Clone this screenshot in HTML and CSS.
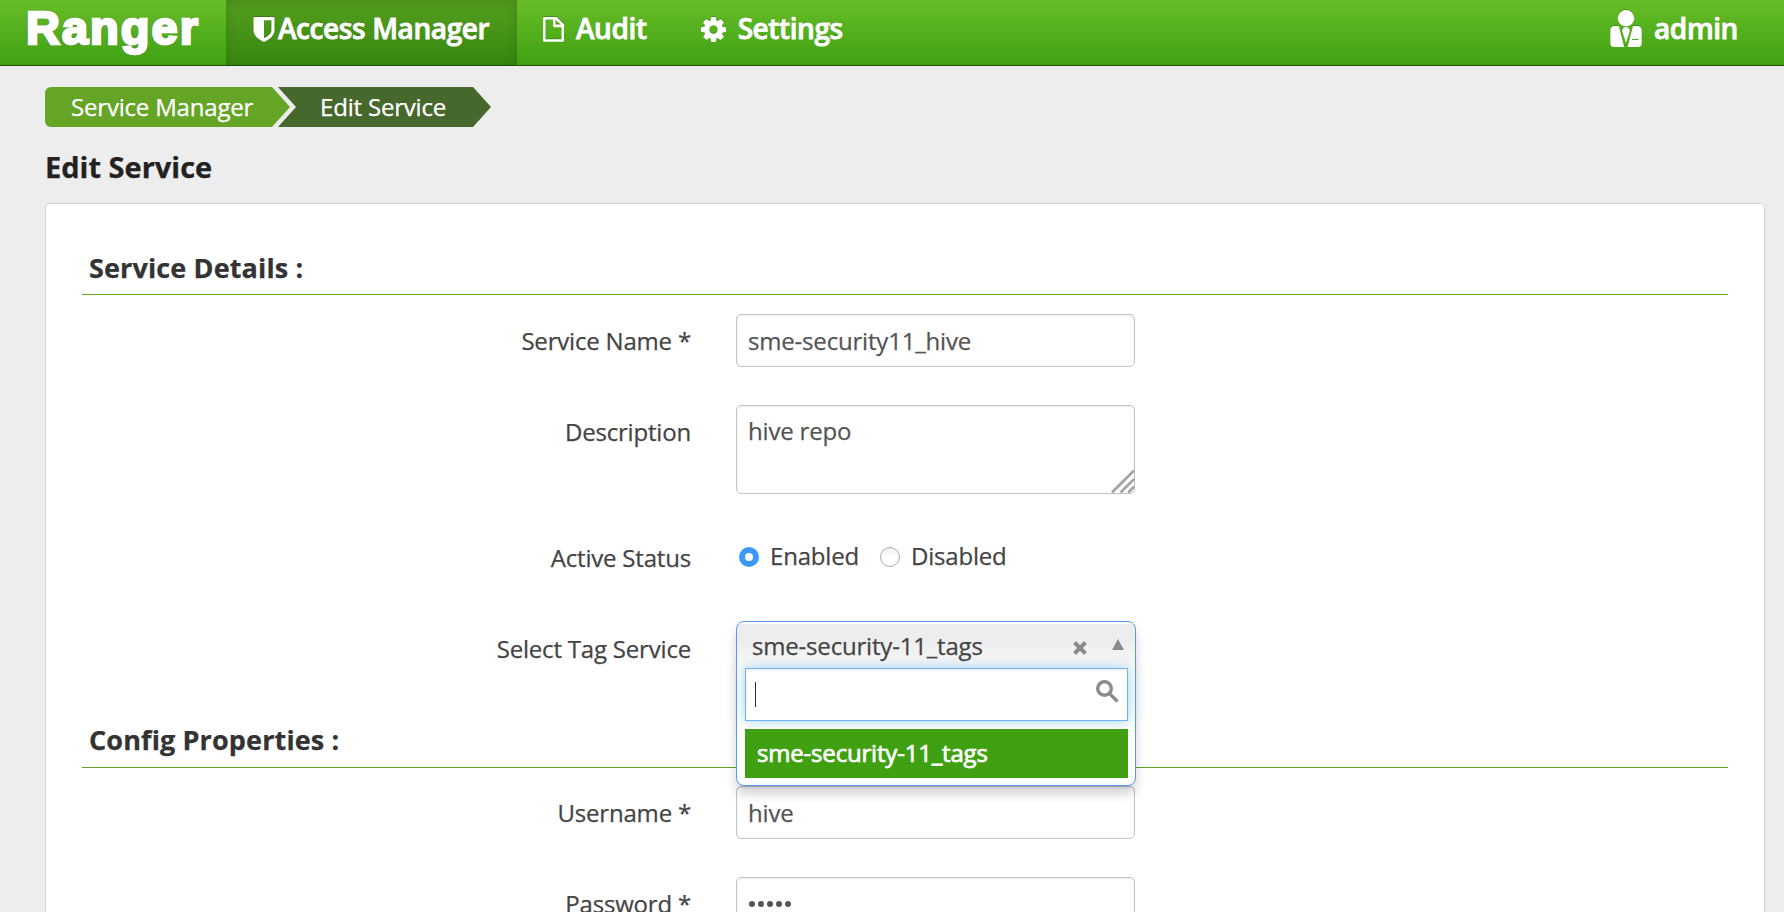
FILE: index.html
```html
<!DOCTYPE html>
<html lang="en">
<head>
<meta charset="utf-8">
<title>Ranger - Edit Service</title>
<link rel="stylesheet" href="styles.css">
</head>
<body>
<header class="navbar">
  <a class="brand">Ranger</a>
  <nav class="menu">
    <a class="menu-item active">
      <svg class="ico-shield" viewBox="0 0 22 25"><path fill-rule="evenodd" d="M1.500 0H20.500Q21.500 0 21.500 1V13C21.500 18.500 16.500 22.500 11 25C5.500 22.500 .5 18.500 .5 13V1Q.5 0 1.500 0ZM11 3.200V21.300C15.500 18.800 18.400 16.300 18.400 13V3.200Z"/></svg><span class="access">Access Manager</span>
    </a>
    <a class="menu-item audit">
      <svg class="ico-file" viewBox="0 0 21 25"><path fill-rule="evenodd" d="M1.500 0H13.500L21 7.300V23.200Q21 24.700 19.500 24.700H1.500Q0 24.700 0 23.200V1.500Q0 0 1.500 0ZM2.500 2.500V22.200H18.500V10.200H11.500Q10 10.200 10 8.700V2.500ZM12.600 2.800V7.600H17.800Z"/></svg><span>Audit</span>
    </a>
    <a class="menu-item settings">
      <svg class="ico-cog" viewBox="0 128 1536 1536"><path d="M1024 896q0-106-75-181t-181-75-181 75-75 181 75 181 181 75 181-75 75-181zm512-109v222q0 12-8 23t-20 13l-185 28q-19 54-39 91 35 50 107 138 10 12 10 25t-9 23q-27 37-99 108t-94 71q-12 0-26-9l-138-108q-44 23-91 38-16 136-29 186-7 28-36 28h-222q-14 0-24.500-8.500t-11.500-21.500l-28-184q-49-16-90-37l-141 107q-10 9-25 9-14 0-25-11-126-114-165-168-7-10-7-23 0-12 8-23 15-21 51-66.500t54-70.500q-27-50-41-99l-183-27q-13-2-21-12.500t-8-23.500v-222q0-12 8-23t19-13l186-28q14-46 39-92-40-57-107-138-10-12-10-24 0-10 9-23 26-36 98.500-107.500t94.500-71.500q13 0 26 10l138 107q44-23 91-38 16-136 29-186 7-28 36-28h222q14 0 24.500 8.500t11.500 21.500l28 184q49 16 90 37l142-107q9-9 24-9 13 0 25 10 129 119 165 170 7 8 7 22 0 12-8 23-15 21-51 66.500t-54 70.500q26 50 41 98l183 28q13 2 21 12.500t8 23.500z"/></svg><span>Settings</span>
    </a>
  </nav>
  <a class="user">
    <svg class="ico-user" viewBox="0 0 32 37"><circle cx="16" cy="8.200" r="8.200"/><path d="M4.500 16H8.800L14.300 37H4Q.3 37 .3 33V20.500Q.3 16 4.500 16ZM23 16H27.500Q31.700 16 31.700 20.500V33Q31.700 37 28 37H17.500Z"/><path d="M13.800 17.200H18.200L20 20.600L16 33L12 20.600Z"/><path class="pocket" d="M22 29.500H28.500"/></svg><span>admin</span>
  </a>
</header>
<main class="page">
  <div class="crumbs">
    <a class="crumb first">Service Manager</a><a class="crumb last">Edit Service</a>
  </div>
  <h1 class="title">Edit Service</h1>
  <section class="panel">
    <h2 class="legend">Service Details :</h2>
    <div class="row">
      <label class="label">Service Name *</label>
      <div class="input">sme-security11_hive</div>
    </div>
    <div class="row area-row">
      <label class="label">Description</label>
      <div class="input area">hive repo
        <svg class="grip" viewBox="0 0 24 24"><path d="M1 24L24 1M10 24L24 10M18 24L24 18"/></svg>
      </div>
    </div>
    <div class="row status-row">
      <label class="label">Active Status</label>
      <div class="radios"><i class="radio on"></i><span class="enabled">Enabled</span><i class="radio"></i><span>Disabled</span></div>
    </div>
    <div class="row tag-row">
      <label class="label">Select Tag Service</label>
      <div class="anchor">
        <div class="select">
          <div class="choice">
            <span>sme-security-11_tags</span>
            <svg class="clear" viewBox="0 0 14 14"><path d="M1.500 1.500L12.500 12.500M12.500 1.500L1.500 12.500"/></svg>
            <svg class="up" viewBox="0 0 12 11"><path d="M6 0L12 11H0Z"/></svg>
          </div>
          <div class="search"><i class="caret"></i>
            <svg class="lens" viewBox="0 0 23 23"><circle cx="8.500" cy="8.500" r="6.800"/><path d="M13.500 13.500L21.500 21.500"/></svg>
          </div>
          <div class="option">sme-security-11_tags</div>
        </div>
      </div>
    </div>
    <h2 class="legend config">Config Properties :</h2>
    <div class="row">
      <label class="label">Username *</label>
      <div class="input">hive</div>
    </div>
    <div class="row">
      <label class="label">Password *</label>
      <div class="input dots"><i></i><i></i><i></i><i></i><i></i></div>
    </div>
  </section>
</main>
</body>
</html>
```
FILE: styles.css
```css
* { box-sizing: border-box; }
html, body { height: 100%; }
body {
  margin: 0;
  overflow: hidden;
  background: #ededed;
  color: #444;
  font: 24px/34px "Open Sans", sans-serif;
  letter-spacing: -.19px;
  -webkit-text-stroke: .25px;
}
svg { display: block; flex: none; overflow: visible; }

.navbar {
  display: flex;
  height: 66px;
  border-bottom: 1px solid #1c4f07;
  background: linear-gradient(#67bd27, #3fa112);
  color: #fff;
  font-size: 28px;
  font-weight: 600;
  line-height: 57px;
  letter-spacing: -.4px;
  text-shadow: 0 -1px 0 rgba(0, 0, 0, .3);
  -webkit-text-stroke: .8px;
}
.navbar svg { fill: #fff; filter: drop-shadow(0 -1px 0 rgba(0, 0, 0, .2)); }
.brand {
  width: 226px;
  padding-left: 26px;
  font: bold 47px/56px "Liberation Sans", Arial, sans-serif;
  letter-spacing: 2px;
  -webkit-text-stroke: 2.500px #fff;
  text-shadow: 1px 1px 1px #777, -1px -1px 1px #777, 1px -1px 1px #777, -1px 1px 1px #777;
}
.menu { display: flex; }
.menu-item { display: flex; height: 65px; }
.active {
  width: 291px;
  padding-left: 27px;
  background: linear-gradient(#549f1e, #378710);
  box-shadow: inset 0 3px 12px rgba(0, 0, 0, .14);
}
.ico-shield { width: 22px; height: 25px; margin: 17px 3px 0 0; }
.audit { padding-left: 26px; }
.ico-file { width: 21px; height: 25px; margin: 17px 12px 0 0; }
.settings { padding-left: 54px; }
.ico-cog { width: 25px; height: 25px; margin: 17px 12px 0 0; }
.user { display: flex; margin-left: auto; padding-right: 46px; }
.ico-user { width: 32px; height: 37px; margin: 10px 12px 0 0; }
.ico-user .pocket { stroke: #4dab1a; stroke-width: 1; }

.page { padding: 21px 19px 0 45px; }
.crumbs { display: flex; height: 40px; color: #fff; line-height: 40px; }
.crumb.first {
  width: 245px;
  padding-left: 26px;
  border-radius: 6px 0 0 6px;
  background: #64a526;
  clip-path: polygon(0 0, 227px 0, 245px 50%, 227px 100%, 0 100%);
}
.crumb.last {
  width: 213px;
  margin-left: -12px;
  padding-left: 42px;
  background: #47682c;
  clip-path: polygon(0 0, 195px 0, 213px 50%, 195px 100%, 0 100%, 18px 50%);
}
.title {
  margin: 20px 0 0;
  color: #222;
  font-size: 29px;
  line-height: 40px;
  letter-spacing: 0;
}

.panel {
  height: 760px;
  margin-top: 16px;
  padding: 37px 36px 0;
  border: 1px solid #d3d3d3;
  border-radius: 5px;
  background: #fff;
}
.legend {
  height: 54px;
  margin: 0 0 19px;
  padding-left: 7px;
  border-bottom: 1px solid #64a526;
  color: #333;
  font-size: 27px;
  line-height: 53px;
  letter-spacing: .13px;
}
.legend.config { margin: 40px 0 18px; line-height: 52px; }
.row {
  display: grid;
  grid-template-columns: 609px 399px;
  column-gap: 45px;
  align-items: start;
  height: 53px;
  margin-bottom: 38px;
}
.area-row { height: 89px; }
.status-row { height: 51px; }
.tag-row { margin: 0; }
.label { padding-top: 10px; text-align: right; white-space: nowrap; }
.status-row .label { padding-top: 9px; }
.tag-row .label { padding-top: 11px; }
.input {
  height: 53px;
  padding: 9px 11px;
  border: 1px solid #c2c2c2;
  border-radius: 5px;
  background: #fff;
  color: #555;
  box-shadow: inset 0 1px 2px rgba(0, 0, 0, .07);
}
.area { position: relative; height: 89px; padding-top: 8px; }
.grip {
  position: absolute;
  right: 0;
  bottom: 0;
  width: 23px;
  height: 24px;
  fill: none;
  stroke: #a3a3a3;
  stroke-width: 2.800;
}
.radios { display: flex; align-items: center; height: 48px; }
.radio {
  width: 20px;
  height: 20px;
  margin: 1px 11px 0 3px;
  border: 1px solid #aaa;
  border-radius: 50%;
  background: linear-gradient(#f1f1f1, #fff 50%);
}
.radio.on { border: 6.500px solid #3b99fc; background: #fff; }
.enabled { margin-right: 18px; }

.anchor { position: relative; height: 53px; }
.select {
  position: absolute;
  z-index: 2;
  width: 400px;
  height: 165px;
  padding: 2px 7px 0 8px;
  border: 1px solid #5897fb;
  border-radius: 8px;
  background: #fff linear-gradient(#fff 2px, #ededed 2px, #ededed 20px, #fff 56px) no-repeat;
  box-shadow: 0 8px 11px rgba(0, 0, 0, .18);
}
.choice { display: flex; height: 44px; padding: 5px 4px 0 7px; }
.clear {
  width: 14px;
  height: 14px;
  margin: 12px 25px 0 auto;
  stroke: #8b8b8b;
  stroke-width: 4;
}
.up { width: 12px; height: 11px; margin-top: 10px; fill: #8b8b8b; }
.search {
  display: flex;
  justify-content: space-between;
  height: 53px;
  padding: 13px 8px 0 9px;
  border: 1px solid #6eb5ee;
  background: #fff;
  box-shadow: 0 0 12px rgba(82, 168, 236, .55), inset 0 2px 3px rgba(0, 0, 0, .06);
}
.caret { width: 1px; height: 25px; background: #333; }
.lens {
  width: 23px;
  height: 23px;
  margin-top: -2px;
  fill: none;
  stroke: #8b8b8b;
  stroke-width: 3.400;
}
.option {
  height: 49px;
  margin-top: 8px;
  padding-left: 12px;
  background: #3fa112;
  color: #fff;
  line-height: 47px;
  -webkit-text-stroke: .7px #fff;
}
.dots { display: flex; gap: 3px; padding: 23px 12px; }
.dots i { width: 6px; height: 6px; border-radius: 50%; background: #555; }
```
